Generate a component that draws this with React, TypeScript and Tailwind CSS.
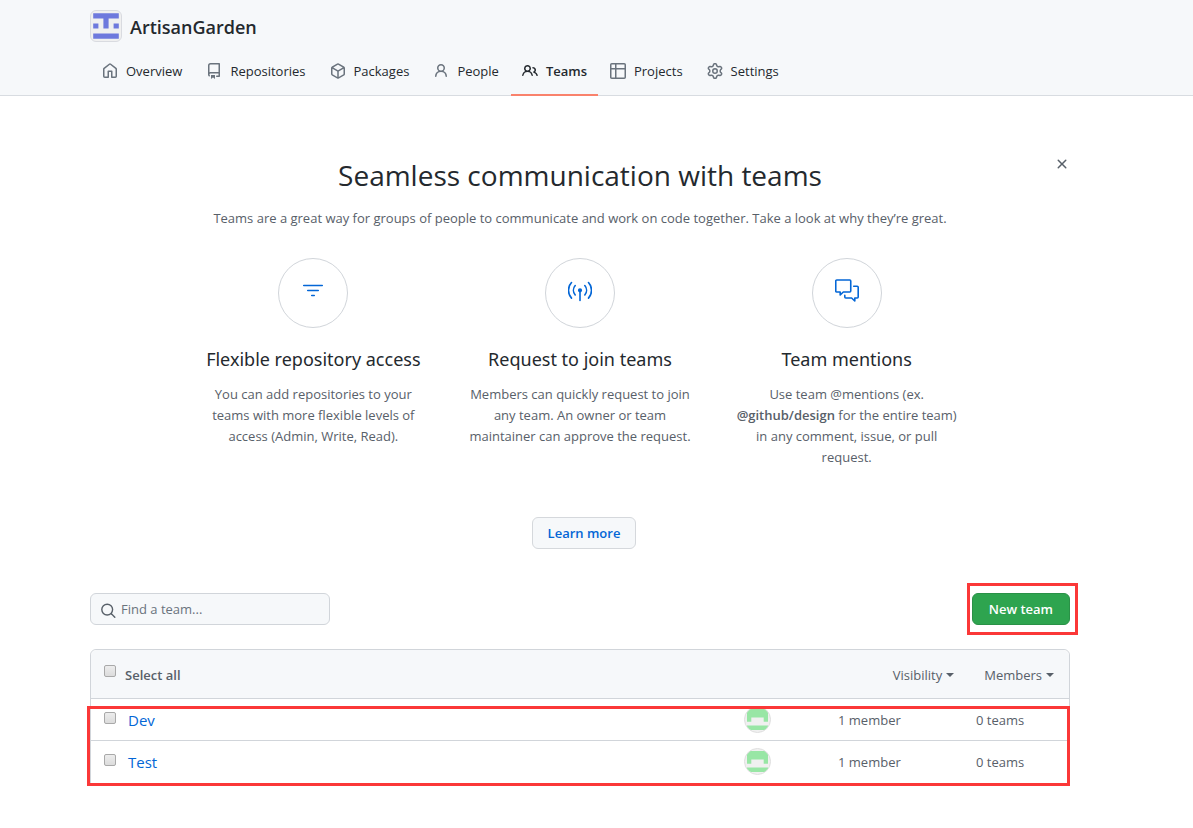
import type { ReactNode } from "react";

const icons = {
  home: "M8.156 1.835a.25.25 0 00-.312 0l-5.25 4.2a.25.25 0 00-.094.196v7.019c0 .138.112.25.25.25H5.5V8.25a.75.75 0 01.75-.75h3.5a.75.75 0 01.75.75v5.25h2.75a.25.25 0 00.25-.25V6.23a.25.25 0 00-.094-.195l-5.25-4.2zM6.906.664a1.75 1.75 0 012.187 0l5.25 4.2c.415.332.657.835.657 1.367v7.019A1.75 1.75 0 0113.25 15h-3.5a.75.75 0 01-.75-.75V9H7v5.25a.75.75 0 01-.75.75h-3.5A1.75 1.75 0 011 13.25V6.23c0-.531.242-1.034.657-1.366l5.25-4.2h-.001z",
  repo: "M2 2.5A2.5 2.5 0 014.5 0h8.75a.75.75 0 01.75.75v12.5a.75.75 0 01-.75.75h-2.5a.75.75 0 110-1.5h1.75v-2h-8a1 1 0 00-.714 1.7.75.75 0 01-1.072 1.05A2.495 2.495 0 012 11.5v-9zm10.5-1V9h-8c-.356 0-.694.074-1 .208V2.5a1 1 0 011-1h8zM5 12.25v3.25a.25.25 0 00.4.2l1.45-1.087a.25.25 0 01.3 0L8.6 15.7a.25.25 0 00.4-.2v-3.25a.25.25 0 00-.25-.25h-3.5a.25.25 0 00-.25.25z",
  package:
    "M8.878.392a1.75 1.75 0 00-1.756 0l-5.25 3.045A1.75 1.75 0 001 4.951v6.098c0 .624.332 1.2.872 1.514l5.25 3.045a1.75 1.75 0 001.756 0l5.25-3.045c.54-.313.872-.89.872-1.514V4.951c0-.624-.332-1.2-.872-1.514L8.878.392zM7.875 1.69a.25.25 0 01.25 0l4.63 2.685L8 7.133 3.245 4.375l4.63-2.685zM2.5 5.677v5.372c0 .09.047.171.125.216l4.625 2.683V8.432L2.5 5.677zm6.25 8.271l4.625-2.683a.25.25 0 00.125-.216V5.677L8.75 8.432v5.516z",
  person:
    "M10.5 5a2.5 2.5 0 11-5 0 2.5 2.5 0 015 0zm.061 3.073a4 4 0 10-5.123 0 6.004 6.004 0 00-3.431 5.142.75.75 0 001.498.07 4.5 4.5 0 018.99 0 .75.75 0 101.498-.07 6.005 6.005 0 00-3.432-5.142z",
  people:
    "M5.5 3.5a2 2 0 100 4 2 2 0 000-4zM2 5.5a3.5 3.5 0 115.898 2.549 5.507 5.507 0 013.034 4.084.75.75 0 11-1.482.235 4.001 4.001 0 00-7.9 0 .75.75 0 01-1.482-.236A5.507 5.507 0 013.102 8.05 3.49 3.49 0 012 5.5zM11 4a.75.75 0 100 1.5 1.5 1.5 0 01.666 2.844.75.75 0 00-.416.672v.352a.75.75 0 00.574.73c1.2.289 2.162 1.2 2.522 2.372a.75.75 0 101.434-.44 5.01 5.01 0 00-2.56-3.012A3 3 0 0011 4z",
  table:
    "M1.75 0A1.75 1.75 0 000 1.75v12.5C0 15.216.784 16 1.75 16h12.5A1.75 1.75 0 0016 14.25V1.75A1.75 1.75 0 0014.25 0H1.75zM1.5 1.75a.25.25 0 01.25-.25H5v3.5H1.5V1.75zM6.5 1.5v3.5h8V1.75a.25.25 0 00-.25-.25H6.5zm8 5h-8v8h7.75a.25.25 0 00.25-.25V6.5zm-9.5 8v-8H1.5v7.75c0 .138.112.25.25.25H5z",
  gear: "M7.429 1.525a6.593 6.593 0 011.142 0c.036.003.108.036.137.146l.289 1.105c.147.56.55.967.997 1.189.174.086.341.183.501.29.417.278.97.423 1.53.27l1.102-.303c.11-.03.175.016.195.046.219.31.41.641.573.989.014.031.022.11-.059.19l-.815.806c-.411.406-.562.957-.53 1.456a4.588 4.588 0 010 .582c-.032.499.119 1.05.53 1.456l.815.806c.08.08.073.159.059.19a6.494 6.494 0 01-.573.99c-.02.029-.086.074-.195.045l-1.103-.303c-.559-.153-1.112-.008-1.529.27-.16.107-.327.204-.5.29-.449.222-.851.628-.998 1.189l-.289 1.105c-.029.11-.101.143-.137.146a6.613 6.613 0 01-1.142 0c-.036-.003-.108-.037-.137-.146l-.289-1.105c-.147-.56-.55-.967-.997-1.189a4.502 4.502 0 01-.501-.29c-.417-.278-.97-.423-1.53-.27l-1.102.303c-.11.03-.175-.016-.195-.046a6.492 6.492 0 01-.573-.989c-.014-.031-.022-.11.059-.19l.815-.806c.411-.406.562-.957.53-1.456a4.587 4.587 0 010-.582c.032-.499-.119-1.05-.53-1.456l-.815-.806c-.08-.08-.073-.159-.059-.19a6.44 6.44 0 01.573-.99c.02-.029.086-.075.195-.045l1.103.303c.559.153 1.112.008 1.529-.27.16-.107.327-.204.5-.29.449-.222.851-.628.998-1.189l.289-1.105c.029-.11.101-.143.137-.146zM8 0c-.236 0-.47.01-.701.03-.743.065-1.29.615-1.458 1.261l-.29 1.106c-.017.066-.078.158-.211.224a5.994 5.994 0 00-.668.386c-.123.082-.233.09-.3.071L3.27 2.776c-.644-.177-1.392.02-1.82.63a7.977 7.977 0 00-.704 1.217c-.315.675-.111 1.422.363 1.891l.815.806c.05.048.098.147.088.294a6.084 6.084 0 000 .772c.01.147-.038.246-.088.294l-.815.806c-.474.469-.678 1.216-.363 1.891.2.428.436.835.704 1.218.428.609 1.176.806 1.82.63l1.103-.303c.066-.019.176-.011.299.071.213.143.436.272.668.386.133.066.194.158.212.224l.289 1.106c.169.646.715 1.196 1.458 1.26a8.094 8.094 0 001.402 0c.743-.064 1.29-.614 1.458-1.26l.29-1.106c.017-.066.078-.158.211-.224a5.98 5.98 0 00.668-.386c.123-.082.233-.09.3-.071l1.102.302c.644.177 1.392-.02 1.82-.63.268-.382.505-.789.704-1.217.315-.675.111-1.422-.364-1.891l-.814-.806c-.05-.048-.098-.147-.088-.294a6.1 6.1 0 000-.772c-.01-.147.039-.246.088-.294l.814-.806c.475-.469.679-1.216.364-1.891a7.992 7.992 0 00-.704-1.218c-.428-.609-1.176-.806-1.82-.63l-1.103.303c-.066.019-.176.011-.299-.071a5.991 5.991 0 00-.668-.386c-.133-.066-.194-.158-.212-.224L10.16 1.29C9.99.645 9.444.095 8.701.031A8.094 8.094 0 008 0zm1.5 8a1.5 1.5 0 11-3 0 1.5 1.5 0 013 0zM11 8a3 3 0 11-6 0 3 3 0 016 0z",
  x: "M3.72 3.72a.75.75 0 011.06 0L8 6.94l3.22-3.22a.75.75 0 111.06 1.06L9.06 8l3.22 3.22a.75.75 0 11-1.06 1.06L8 9.06l-3.22 3.22a.75.75 0 01-1.06-1.06L6.94 8 3.72 4.78a.75.75 0 010-1.06z",
};

type IconName = keyof typeof icons;

function Icon({ name, className }: { name: IconName; className: string }) {
  return (
    <svg viewBox="0 0 16 16" className={`size-4 shrink-0 fill-current ${className}`} aria-hidden="true">
      <path fillRule="evenodd" d={icons[name]} />
    </svg>
  );
}

function OutlineIcon({ children }: { children: ReactNode }) {
  return (
    <svg
      viewBox="0 0 24 24"
      className="size-6 text-[#0366d6]"
      fill="none"
      stroke="currentColor"
      strokeWidth="1.6"
      strokeLinecap="round"
      strokeLinejoin="round"
      aria-hidden="true"
    >
      {children}
    </svg>
  );
}

const tabs: { label: string; icon: IconName; active?: boolean }[] = [
  { label: "Overview", icon: "home" },
  { label: "Repositories", icon: "repo" },
  { label: "Packages", icon: "package" },
  { label: "People", icon: "person" },
  { label: "Teams", icon: "people", active: true },
  { label: "Projects", icon: "table" },
  { label: "Settings", icon: "gear" },
];

const features: { title: string; icon: ReactNode; text: ReactNode }[] = [
  {
    title: "Flexible repository access",
    icon: <path d="M2.75 6.5h18.5M6.75 11.5h10.5M10.75 16.5h2.5" />,
    text: "You can add repositories to your teams with more flexible levels of access (Admin, Write, Read).",
  },
  {
    title: "Request to join teams",
    icon: (
      <>
        <path d="M3.5 3.5a11.6 11.6 0 0 0 0 15.6M20.5 3.5a11.6 11.6 0 0 1 0 15.6M7.2 6.6a7.2 7.2 0 0 0 0 9.4M16.8 6.6a7.2 7.2 0 0 1 0 9.4M12 12v9.5" />
        <circle cx="12" cy="11.3" r="1.3" fill="currentColor" />
      </>
    ),
    text: "Members can quickly request to join any team. An owner or team maintainer can approve the request.",
  },
  {
    title: "Team mentions",
    icon: (
      <path d="M1.75 1h13a1 1 0 0 1 1 1v10a1 1 0 0 1-1 1H8.3L5.2 16v-3H1.75a1 1 0 0 1-1-1V2a1 1 0 0 1 1-1zM18.7 7.2h3.5a1 1 0 0 1 1 1v9.8a1 1 0 0 1-1 1h-2.4v3l-3.2-3h-5.8a1 1 0 0 1-1-1v-1.6" />
    ),
    text: (
      <>
        Use team @mentions (ex. <strong className="font-semibold">@github/design</strong> for the entire team) in any
        comment, issue, or pull request.
      </>
    ),
  },
];

const teams = [
  { name: "Dev", members: "1 member", children: "0 teams" },
  { name: "Test", members: "1 member", children: "0 teams" },
];

function OrgLogo() {
  return (
    <svg viewBox="0 0 32 32" className="size-8" aria-hidden="true">
      <rect x="0.5" y="0.5" width="31" height="31" rx="5.5" fill="#f0f0f0" stroke="#d9dbe0" />
      <path
        fill="#6e79dd"
        d="M3.2 3.2h25.6v5.2H18.6v10.2h-5.2V8.4H3.2zM3.2 13.4h5.2v5.2H3.2zM23.6 13.4h5.2v5.2h-5.2zM3.2 23.6h25.6v5.2H3.2z"
      />
    </svg>
  );
}

function MemberAvatar() {
  return (
    <svg viewBox="0 0 27 27" className="size-[27px]" role="img" aria-label="Team member">
      <defs>
        <clipPath id="avatar-clip">
          <circle cx="13.5" cy="13.5" r="12.5" />
        </clipPath>
      </defs>
      <circle cx="13.5" cy="13.5" r="13" fill="#f0f0f0" stroke="#dedede" />
      <path
        clipPath="url(#avatar-clip)"
        fill="#98e6a5"
        d="M3 3h21v12.8h-4.3v-4.3H7.3v4.3H3zM3 19.6h21V24H3z"
      />
    </svg>
  );
}

function CheckBox({ id, label }: { id: string; label?: string }) {
  return (
    <input
      id={id}
      type="checkbox"
      aria-label={label}
      className="block size-3 shrink-0 appearance-none rounded-[2px] border border-[#a9a9a9] bg-linear-to-b from-[#ededed] to-[#dcdcdc] checked:bg-[#0366d6]"
    />
  );
}

function SortButton({ children }: { children: ReactNode }) {
  return (
    <button type="button" className="flex items-center gap-1">
      {children}
      <span className="border-x-4 border-t-4 border-x-transparent border-t-current" />
    </button>
  );
}

export default function App() {
  return (
    <div className="min-h-screen bg-white font-['Open_Sans','Noto_Sans',sans-serif] text-[13px] leading-[21px] text-[#586069]">
      <header className="border-b border-[#d8dce1] bg-[#f6f8fa]">
        <div className="max-w-[1160px] px-[90px] pt-2.5">
          <div className="flex items-start gap-2">
            <OrgLogo />
            <h1 className="text-[18px] leading-[34px] font-semibold text-[#24292e]">ArtisanGarden</h1>
          </div>
          <nav className="-mb-px flex pt-1" aria-label="Organization">
            {tabs.map((tab) => (
              <a
                key={tab.label}
                href={`#${tab.label.toLowerCase()}`}
                aria-current={tab.active ? "page" : undefined}
                className={`flex h-12 items-center gap-2 border-b-2 text-[#24292e] ${
                  tab.active ? "border-[#f9826c] px-[11px] font-semibold" : "border-transparent px-3"
                }`}
              >
                <Icon name={tab.icon} className={tab.active ? "text-[#24292e]" : "text-[#6a737d]"} />
                {tab.label}
              </a>
            ))}
          </nav>
        </div>
      </header>

      <main className="max-w-[1160px] px-[90px] pb-10">
        <section className="relative pt-14 text-center">
          <button type="button" aria-label="Dismiss" className="absolute top-[60px] right-0 text-[#586069]">
            <Icon name="x" className="" />
          </button>
          <h2 className="text-[28px] leading-[46px] text-[#24292e]">Seamless communication with teams</h2>
          <p className="mt-2.5">
            Teams are a great way for groups of people to communicate and work on code together. Take a look at why
            they’re great.
          </p>
          <div className="mx-auto mt-[29px] grid max-w-[800px] grid-cols-3">
            {features.map((feature) => (
              <div key={feature.title} className="px-5">
                <div className="mx-auto flex size-[70px] items-center justify-center rounded-full border border-[#d1d5da] pb-1">
                  <OutlineIcon>{feature.icon}</OutlineIcon>
                </div>
                <h3 className="-mx-4 mt-4 mb-2.5 font-['Noto_Sans',sans-serif] text-[18px] leading-[30px] text-[#24292e]">
                  {feature.title}
                </h3>
                <p>{feature.text}</p>
              </div>
            ))}
          </div>
          <a
            href="#learn-more"
            className="mt-[49px] ml-2 inline-flex h-8 items-center rounded-md border border-[#d5d8dc] bg-[#f6f8fa] px-[15px] font-semibold text-[#0366d6]"
          >
            Learn more
          </a>
        </section>

        <div className="mt-11 flex items-center justify-between">
          <label className="flex h-8 w-60 items-center gap-1 rounded-md border border-[#d1d5da] bg-[#f6f8fa] pl-2.5">
            <svg
              viewBox="0 0 16 16"
              className="mt-1 size-4 shrink-0"
              fill="none"
              stroke="currentColor"
              strokeWidth="1.4"
              strokeLinecap="round"
              aria-hidden="true"
            >
              <circle cx="6.2" cy="6.6" r="5.4" />
              <path d="M10.4 10.8l3.4 3.4" />
            </svg>
            <input
              type="search"
              aria-label="Find a team"
              placeholder="Find a team..."
              className="w-full min-w-0 bg-transparent outline-none placeholder:text-[#6a737d]"
            />
          </label>
          <div className="relative">
            <button
              type="button"
              className="block h-8 rounded-md border border-[#2a9147] bg-[#2ea44f] px-4 font-semibold text-white"
            >
              New team
            </button>
            <span className="pointer-events-none absolute -top-2.5 -right-2 -bottom-2.5 -left-[5px] border-3 border-[#fb3838]" />
          </div>
        </div>

        <div className="relative mt-6">
          <div className="rounded-t-md border border-[#d1d5da]">
            <div className="flex h-12 items-center justify-between rounded-t-md bg-[#f6f8fa] pt-0.5 pr-[15px] pl-[13px]">
              <div className="flex items-start gap-[9px]">
                <CheckBox id="select-all" />
                <label htmlFor="select-all" className="font-semibold">
                  Select all
                </label>
              </div>
              <div className="flex gap-[30px]">
                <SortButton>Visibility</SortButton>
                <SortButton>Members</SortButton>
              </div>
            </div>
            <table className="w-full table-fixed">
              <colgroup>
                <col className="w-[37px]" />
                <col />
                <col className="w-[94px]" />
                <col className="w-[138px]" />
                <col className="w-[93px]" />
              </colgroup>
              <tbody>
                {teams.map((team) => (
                  <tr key={team.name} className="h-[42px] border-t border-[#d1d5da]">
                    <td className="pb-1 pl-[13px]">
                      <CheckBox id={`select-${team.name}`} label={`Select ${team.name}`} />
                    </td>
                    <td className="pt-0.5">
                      <a href={`#${team.name.toLowerCase()}`} className="text-[15px] text-[#0366d6]">
                        {team.name}
                      </a>
                    </td>
                    <td>
                      <MemberAvatar />
                    </td>
                    <td className="pt-0.5">{team.members}</td>
                    <td className="pt-0.5">{team.children}</td>
                  </tr>
                ))}
              </tbody>
            </table>
          </div>
          <span className="pointer-events-none absolute top-[57px] right-0 -bottom-0.5 -left-[3px] border-3 border-[#fb3838]" />
        </div>
      </main>
    </div>
  );
}
